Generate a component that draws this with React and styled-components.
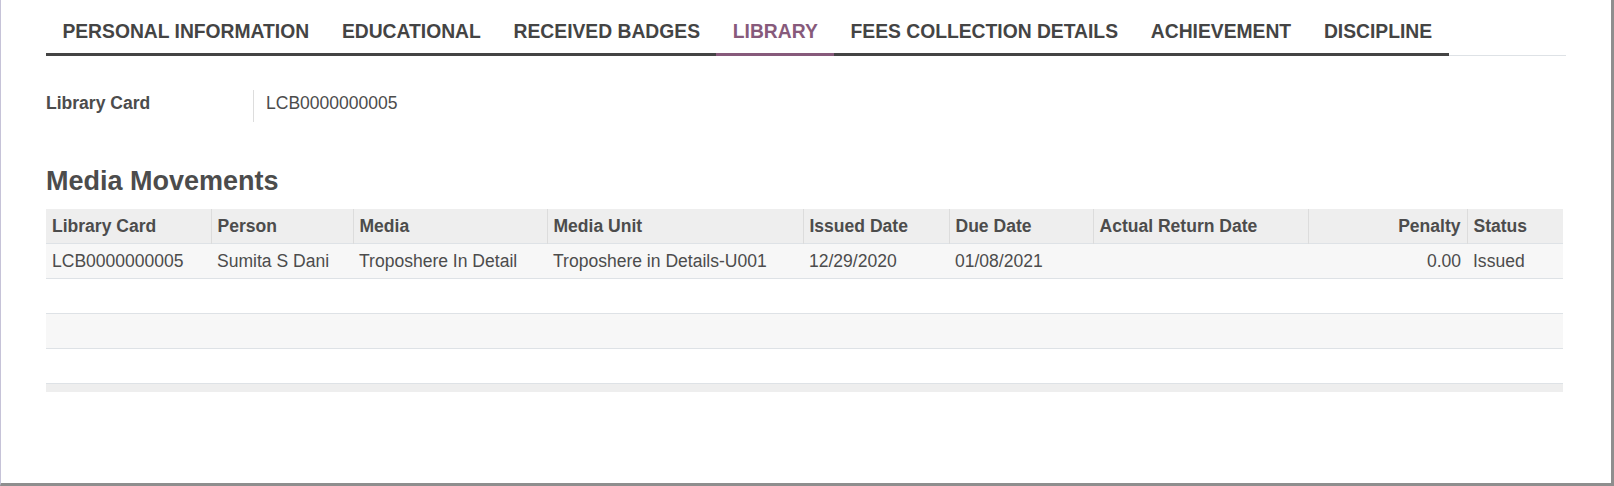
import React from "react";
import styled, { createGlobalStyle } from "styled-components";

const GlobalStyle = createGlobalStyle`
  html, body {
    margin: 0;
    padding: 0;
    background: #fff;
  }
  body {
    font-family: "Liberation Sans", Arial, sans-serif;
    color: #4c4c4c;
  }
`;

const Sheet = styled.div`
  width: 1614px;
  height: 486px;
  box-sizing: border-box;
  border-left: 1px solid #c6c3d8;
  border-right: 3px solid #8e8e8e;
  border-bottom: 3px solid #8e8e8e;
  padding: 10px 45px 0;
  font-size: 17.55px;
  line-height: 1.5;
  overflow: hidden;
`;

const TabBar = styled.ul`
  display: flex;
  list-style: none;
  margin: 0;
  padding: 0;
  border-bottom: 1px solid #dee2e6;
`;

const Tab = styled.li`
  margin-bottom: -1px;
  padding: 8px 16.4px 6px;
  border-bottom: 3px solid ${(p) => (p.$active ? "#875a7b" : "#444")};
  color: ${(p) => (p.$active ? "#875a7b" : "#444")};
  font-size: 19.3px;
  font-weight: 700;
  text-transform: uppercase;
  white-space: nowrap;
`;

const FieldRow = styled.div`
  display: flex;
  margin-top: 34px;
`;

const FieldLabel = styled.div`
  width: 207px;
  font-weight: 700;
`;

const FieldValue = styled.div`
  border-left: 1px solid #ddd;
  padding: 0 0 6px 12px;
`;

const Heading = styled.h2`
  margin: 43px 0 11px;
  font-size: 27px;
  line-height: 1.2;
  font-weight: 700;
`;

const Table = styled.table`
  width: 1517px;
  table-layout: fixed;
  border-collapse: collapse;
`;

const Th = styled.th`
  padding: 4px 6px;
  line-height: 26px;
  background: #eee;
  font-weight: 700;
  text-align: ${(p) => (p.$right ? "right" : "left")};
  white-space: nowrap;
  & + & {
    border-left: 1px solid #dcdcdc;
  }
`;

const Tr = styled.tr`
  border-top: 1px solid #dee2e6;
  background: ${(p) => (p.$odd ? "#f7f7f7" : "#fff")};
`;

const Td = styled.td`
  padding: 4px 6px;
  height: 26px;
  line-height: 26px;
  text-align: ${(p) => (p.$right ? "right" : "left")};
  white-space: nowrap;
`;

const FootRow = styled.tr`
  border-top: 1px solid #dee2e6;
  background: #eee;
  td {
    height: 8px;
    padding: 0;
  }
`;

const tabs = [
  "Personal Information",
  "Educational",
  "Received Badges",
  "Library",
  "Fees Collection Details",
  "Achievement",
  "Discipline",
];

const columns = [
  { label: "Library Card", width: 165 },
  { label: "Person", width: 142 },
  { label: "Media", width: 194 },
  { label: "Media Unit", width: 256 },
  { label: "Issued Date", width: 146 },
  { label: "Due Date", width: 144 },
  { label: "Actual Return Date", width: 215 },
  { label: "Penalty", width: 159, right: true },
  { label: "Status", width: 96 },
];

const rows = [
  [
    "LCB0000000005",
    "Sumita S Dani",
    "Troposhere In Detail",
    "Troposhere in Details-U001",
    "12/29/2020",
    "01/08/2021",
    "",
    "0.00",
    "Issued",
  ],
  [],
  [],
  [],
];

const App = () => {
  return (
    <Sheet>
      <GlobalStyle />
      <TabBar>
        {tabs.map((t) => (
          <Tab key={t} $active={t === "Library"}>
            {t}
          </Tab>
        ))}
      </TabBar>

      <FieldRow>
        <FieldLabel>Library Card</FieldLabel>
        <FieldValue>LCB0000000005</FieldValue>
      </FieldRow>

      <Heading>Media Movements</Heading>

      <Table>
        <colgroup>
          {columns.map((c) => (
            <col key={c.label} style={{ width: c.width }} />
          ))}
        </colgroup>
        <thead>
          <tr>
            {columns.map((c) => (
              <Th key={c.label} $right={c.right}>
                {c.label}
              </Th>
            ))}
          </tr>
        </thead>
        <tbody>
          {rows.map((r, i) => (
            <Tr key={i} $odd={i % 2 === 0}>
              {columns.map((c, j) => (
                <Td key={c.label} $right={c.right}>
                  {r[j] || ""}
                </Td>
              ))}
            </Tr>
          ))}
        </tbody>
        <tfoot>
          <FootRow>
            <td colSpan={columns.length} />
          </FootRow>
        </tfoot>
      </Table>
    </Sheet>
  );
};

export default App;
